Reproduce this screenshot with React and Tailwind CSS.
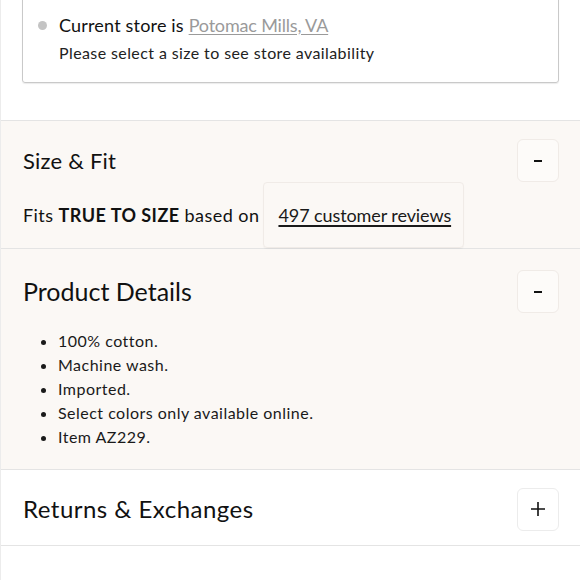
const DETAILS = [
  '100% cotton.',
  'Machine wash.',
  'Imported.',
  'Select colors only available online.',
  'Item AZ229.',
]

const ToggleButton = ({ open, light }) => (
  <button
    className={`w-[42px] h-[43px] flex items-center justify-center rounded-[6px] border ${
      light ? 'bg-white border-[#ececec]' : 'bg-[#fdfbf9] border-[#f0ebe7]'
    }`}
  >
    {open ? (
      <span className="block w-[8px] h-[2px] bg-[#111]" />
    ) : (
      <svg width="16" height="16" viewBox="0 0 16 16">
        <path d="M8 1v14M1 8h14" stroke="#111" strokeWidth="1.6" />
      </svg>
    )}
  </button>
)

const App = () => {
  return (
    <div
      className="w-[580px] h-[580px] overflow-hidden bg-white border-l border-[#ececec] text-[#111]"
      style={{ fontFamily: 'Lato, "Open Sans", sans-serif' }}
    >
      {/* Store availability */}
      <div className="border-b border-[#e4e4e4] pl-[21px] pr-[21px]">
        <div className="-mt-4 mb-[37px] border border-[#c9c9c9] rounded-[3px] pt-[27px] pb-[17px] pl-[36px] shadow-[0_1px_1px_rgba(0,0,0,0.08)]">
          <div className="relative flex items-center h-[26px] text-[18px]">
            <span className="absolute -left-[21px] top-[9px] w-[9px] h-[9px] rounded-full bg-[#c4c4c4]" />
            <span className="tracking-[0.01em]">Current store is&nbsp;</span>
            <a className="text-[#9a9a9a] underline underline-offset-2 tracking-[-0.01em]">Potomac Mills, VA</a>
          </div>
          <p className="mt-[3px] h-[24px] leading-[24px] text-[16px] text-[#222] tracking-[0.025em]">
            Please select a size to see store availability
          </p>
        </div>
      </div>

      {/* Size & Fit */}
      <div className="bg-[#fbf8f5] border-b border-[#e4e4e4] pl-[22px] pr-[21px] pt-[18px]">
        <div className="flex items-center justify-between h-[43px]">
          <h2 className="text-[22px] leading-none tracking-[0.01em]">Size &amp; Fit</h2>
          <ToggleButton open />
        </div>
        <div className="flex items-center text-[18px]">
          <span className="tracking-[0.025em]">
            Fits <b className="font-bold">TRUE TO SIZE</b> based on
          </span>
          <a className="ml-[4px] h-[66px] flex items-center pl-[14px] pr-[12px] rounded-[4px] border border-[#f0ebe7] underline underline-offset-[3px] decoration-[1.5px] text-[#1a1a1a] tracking-[-0.005em] shadow-[0_1px_1px_rgba(0,0,0,0.04)]">
            497 customer reviews
          </a>
        </div>
      </div>

      {/* Product Details */}
      <div className="bg-[#fbf8f5] border-b border-[#e4e4e4] pl-[22px] pr-[21px] pt-[21px] pb-[20px]">
        <div className="flex items-center justify-between h-[43px]">
          <h2 className="text-[25px] leading-none">Product Details</h2>
          <ToggleButton open />
        </div>
        <ul className="mt-[16px] pl-[35px] list-disc text-[16px] leading-[24px] text-[#1a1a1a] tracking-[0.03em]">
          {DETAILS.map((d) => (
            <li key={d}>{d}</li>
          ))}
        </ul>
      </div>

      {/* Returns & Exchanges */}
      <div className="bg-white border-b border-[#e4e4e4] pl-[22px] pr-[21px] pt-[17px] pb-[14px]">
        <div className="flex items-center justify-between h-[44px]">
          <h2 className="text-[24px] leading-none tracking-[0.02em]">Returns &amp; Exchanges</h2>
          <ToggleButton light />
        </div>
      </div>
    </div>
  )
}

export default App
